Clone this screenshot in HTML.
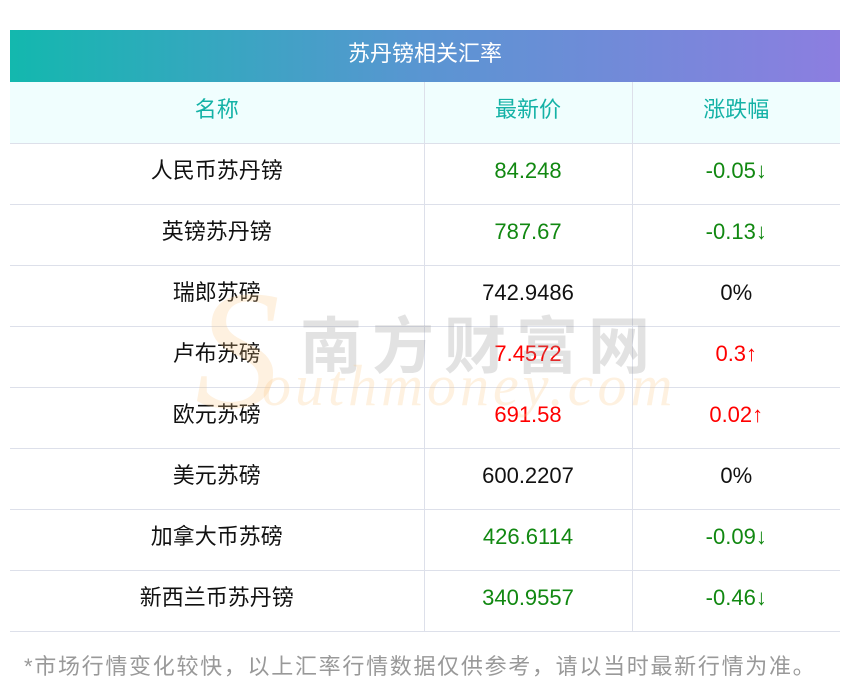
<!DOCTYPE html>
<html><head><meta charset="utf-8"><style>
body{margin:0;background:#fff;width:850px;height:697px;overflow:hidden;position:relative;font-family:"Liberation Sans","Noto Sans CJK SC",sans-serif;}
.t{position:absolute;left:10px;top:30px;width:830px;}
.h{height:52px;background:linear-gradient(90deg,#13b8ae,#5a95d2,#8c7ee0);color:#fff;font-size:22px;text-align:center;line-height:48px;}
table{border-collapse:collapse;width:830px;table-layout:fixed;}
td{height:61px;border:1px solid #dde0ea;border-top:none;text-align:center;font-size:22px;color:#111;padding:0 0 5px 0;box-sizing:border-box;}
tr td:first-child{border-left:none}
tr td:last-child{border-right:none}
tr.hd td{background:#f0fefe;color:#14b2a6;height:61px;padding-bottom:5px;}
.c{position:relative;top:-2px;}
.g{color:#118811}.r{color:#f00}
.wm{position:absolute;pointer-events:none;}
.foot{position:absolute;left:24px;top:649px;font-size:22px;letter-spacing:1.7px;color:#999;}
</style></head><body>
<div class="t">
<div class="h">苏丹镑相关汇率</div>
<table>
<col style="width:414px"><col style="width:208px"><col style="width:208px">
<tr class="hd"><td><span class="c">名称</span></td><td><span class="c">最新价</span></td><td><span class="c">涨跌幅</span></td></tr>
<tr><td><span class="c">人民币苏丹镑</span></td><td class="g">84.248</td><td class="g">-0.05↓</td></tr>
<tr><td><span class="c">英镑苏丹镑</span></td><td class="g">787.67</td><td class="g">-0.13↓</td></tr>
<tr><td><span class="c">瑞郎苏磅</span></td><td>742.9486</td><td>0%</td></tr>
<tr><td><span class="c">卢布苏磅</span></td><td class="r">7.4572</td><td class="r">0.3↑</td></tr>
<tr><td><span class="c">欧元苏磅</span></td><td class="r">691.58</td><td class="r">0.02↑</td></tr>
<tr><td><span class="c">美元苏磅</span></td><td>600.2207</td><td>0%</td></tr>
<tr><td><span class="c">加拿大币苏磅</span></td><td class="g">426.6114</td><td class="g">-0.09↓</td></tr>
<tr><td><span class="c">新西兰币苏丹镑</span></td><td class="g">340.9557</td><td class="g">-0.46↓</td></tr>
</table>
</div>
<div class="wm" style="left:195px;top:280px;font-family:'Liberation Serif',serif;font-style:italic;font-size:170px;color:rgba(252,200,130,0.25);line-height:140px;">S</div>
<div class="wm" style="left:300px;top:296px;font-size:62px;font-weight:bold;color:rgba(150,150,150,0.28);letter-spacing:10px;">南方财富网</div>
<div class="wm" style="left:262px;top:352px;font-family:'Liberation Serif',serif;font-style:italic;font-size:58px;color:rgba(252,200,130,0.25);letter-spacing:4px;">outhmoney.com</div>
<div class="foot">*市场行情变化较快，以上汇率行情数据仅供参考，请以当时最新行情为准。</div>
</body></html>
